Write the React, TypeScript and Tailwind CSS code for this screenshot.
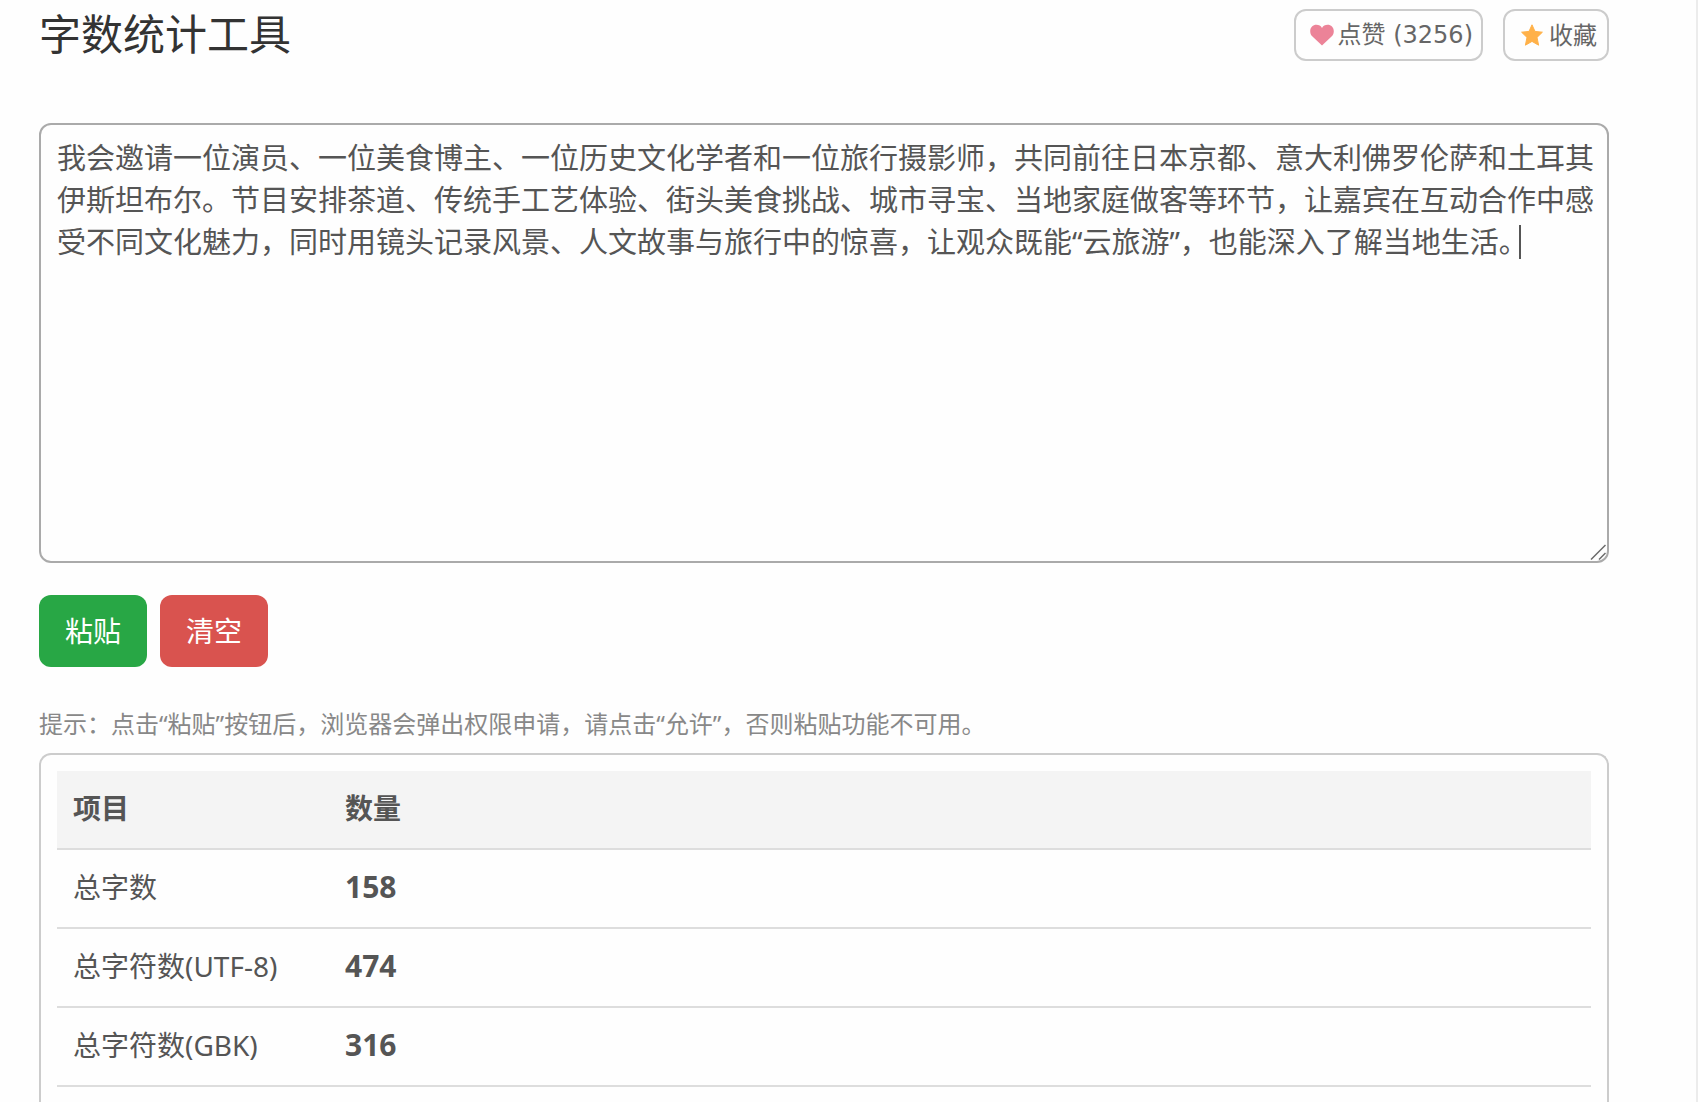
const SAMPLE =
  "我会邀请一位演员、一位美食博主、一位历史文化学者和一位旅行摄影师，共同前往日本京都、意大利佛罗伦萨和土耳其伊斯坦布尔。节目安排茶道、传统手工艺体验、街头美食挑战、城市寻宝、当地家庭做客等环节，让嘉宾在互动合作中感受不同文化魅力，同时用镜头记录风景、人文故事与旅行中的惊喜，让观众既能“云旅游”，也能深入了解当地生活。";

const ROWS: [string, number][] = [
  ["总字数", 158],
  ["总字符数(UTF-8)", 474],
  ["总字符数(GBK)", 316],
];

function Heart() {
  return (
    <svg className="h-[22px] w-6" viewBox="0 0 24 22" fill="#ec8398" aria-hidden="true">
      <path d="M12 21.6L2.2 12.2C0.8 10.8 0.2 9 0.2 7.2C0.2 3.4 3 0.8 6.4 0.8C8.8 0.8 11 2 12 4C13 2 15.2 0.8 17.6 0.8C21 0.8 23.8 3.4 23.8 7.2C23.8 9 23.2 10.8 21.8 12.2Z" />
    </svg>
  );
}

function Star() {
  return (
    <svg className="h-[22px] w-[22px]" viewBox="0 0 22 22" fill="#ffb149" stroke="#ffb149" strokeWidth="1" strokeLinejoin="round" aria-hidden="true">
      <path d="M11 0.8L14 7.4L21.4 8.2L16 13.4L17.6 21.2L11 17.4L4.4 21.2L6 13.4L0.6 8.2L8 7.4Z" />
    </svg>
  );
}

export default function App() {
  return (
    <main className="flex h-screen flex-col overflow-hidden border-r-2 border-[#ececec] bg-[#fefefe] pt-[9px] pr-[87px] pl-[39px] font-['Noto_Sans','Noto_Sans_CJK_SC',sans-serif] text-[#555]">
      <header className="flex h-[52px] shrink-0 items-start justify-between">
        <h1 className="text-[42px] leading-[50px] text-[#333]">字数统计工具</h1>
        <div className="flex gap-5">
          <button
            type="button"
            className="flex h-[52px] items-center gap-1 rounded-xl border-2 border-[#ccc] pr-2 pl-[14px] font-['DejaVu_Sans','Noto_Sans_CJK_SC',sans-serif] text-2xl text-[#666]"
          >
            <Heart />
            <span className="whitespace-nowrap">点赞 (3256)</span>
          </button>
          <button
            type="button"
            className="flex h-[52px] items-center gap-[6px] rounded-xl border-2 border-[#ccc] pr-[10px] pl-4 text-2xl text-[#666]"
          >
            <Star />
            <span className="whitespace-nowrap">收藏</span>
          </button>
        </div>
      </header>

      <div className="relative mt-[62px] shrink-0">
        <textarea
          aria-label="输入文本"
          defaultValue={SAMPLE}
          spellCheck={false}
          className="block h-[440px] w-full resize-none rounded-xl border-2 border-[#aaa] py-3 pr-2 pl-4 text-[29px] leading-[42px] outline-none"
        />
        <span className="absolute top-[102px] right-[88px] h-[34px] w-[2px] bg-[#555]" />
        <svg className="absolute right-[3px] bottom-[3px] h-4 w-4" viewBox="0 0 16 16" fill="none" stroke="#6b6b6b" strokeWidth="1.5" aria-hidden="true">
          <path d="M1 15.5L15.5 1M9 15.5L15.5 9" />
        </svg>
      </div>

      <div className="mt-8 flex shrink-0 gap-[13px]">
        <button type="button" className="h-[72px] rounded-xl bg-[#28a745] px-[26px] text-[28px] text-white">
          粘贴
        </button>
        <button type="button" className="h-[72px] rounded-xl bg-[#d9534f] px-[26px] text-[28px] text-white">
          清空
        </button>
      </div>

      <p className="mt-[39px] shrink-0 text-2xl leading-9 text-[#888]">
        提示：点击“粘贴”按钮后，浏览器会弹出权限申请，请点击“允许”，否则粘贴功能不可用。
      </p>

      <section className="mt-[11px] min-h-0 flex-1 overflow-hidden rounded-t-xl border-2 border-b-0 border-[#ccc] p-4">
        <table className="w-full border-separate border-spacing-0 text-left text-[28px] leading-9">
          <thead className="bg-[#f4f4f4]">
            <tr>
              <th scope="col" className="h-[79px] w-[272px] border-b-2 border-[#ddd] px-4 pb-1 font-bold">项目</th>
              <th scope="col" className="h-[79px] border-b-2 border-[#ddd] px-4 pb-1 font-bold">数量</th>
            </tr>
          </thead>
          <tbody>
            {ROWS.map(([name, count]) => (
              <tr key={name}>
                <td className="h-[79px] border-b-2 border-[#ddd] px-4 pb-1 whitespace-nowrap">{name}</td>
                <td className="h-[79px] border-b-2 border-[#ddd] px-4 pb-1 text-[30px] font-bold">{count}</td>
              </tr>
            ))}
          </tbody>
        </table>
      </section>
    </main>
  );
}
